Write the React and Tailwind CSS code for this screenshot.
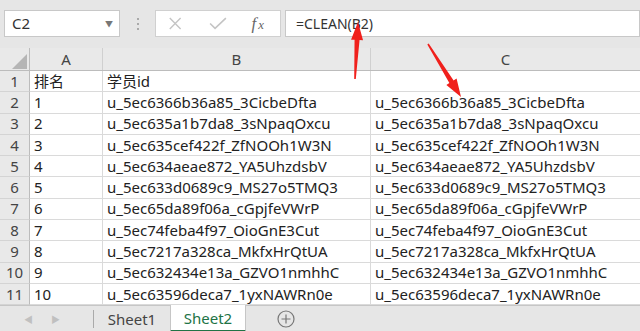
import React from 'react';

const rows = [
  ['排名', '学员id', ''],
  ['1', 'u_5ec6366b36a85_3CicbeDfta', 'u_5ec6366b36a85_3CicbeDfta'],
  ['2', 'u_5ec635a1b7da8_3sNpaqOxcu', 'u_5ec635a1b7da8_3sNpaqOxcu'],
  ['3', 'u_5ec635cef422f_ZfNOOh1W3N', 'u_5ec635cef422f_ZfNOOh1W3N'],
  ['4', 'u_5ec634aeae872_YA5UhzdsbV', 'u_5ec634aeae872_YA5UhzdsbV'],
  ['5', 'u_5ec633d0689c9_MS27o5TMQ3', 'u_5ec633d0689c9_MS27o5TMQ3'],
  ['6', 'u_5ec65da89f06a_cGpjfeVWrP', 'u_5ec65da89f06a_cGpjfeVWrP'],
  ['7', 'u_5ec74feba4f97_OioGnE3Cut', 'u_5ec74feba4f97_OioGnE3Cut'],
  ['8', 'u_5ec7217a328ca_MkfxHrQtUA', 'u_5ec7217a328ca_MkfxHrQtUA'],
  ['9', 'u_5ec632434e13a_GZVO1nmhhC', 'u_5ec632434e13a_GZVO1nmhhC'],
  ['10', 'u_5ec63596deca7_1yxNAWRn0e', 'u_5ec63596deca7_1yxNAWRn0e'],
];

const font = { fontFamily: '"Noto Sans", "Noto Sans CJK SC", sans-serif' };

const Arrow = ({ x1, y1, x2, y2 }) => {
  // tapered red arrow, tip at (x2, y2)
  const dx = x2 - x1;
  const dy = y2 - y1;
  const len = Math.hypot(dx, dy);
  const ux = dx / len;
  const uy = dy / len;
  const px = -uy;
  const py = ux;
  const hb = 18; // head length
  const bx = x2 - ux * hb;
  const by = y2 - uy * hb;
  const pts = [
    [x1 + px * 0.8, y1 + py * 0.8],
    [bx + px * 2.5, by + py * 2.5],
    [bx + px * 6, by + py * 6],
    [x2, y2],
    [bx - px * 6, by - py * 6],
    [bx - px * 2.5, by - py * 2.5],
    [x1 - px * 0.8, y1 - py * 0.8],
  ];
  return <polygon points={pts.map((p) => p.join(',')).join(' ')} fill="#f0201c" />;
};

const App = () => {
  return (
    <div className="relative w-[640px] h-[331px] overflow-hidden bg-[#e6e6e6] text-[#222]" style={font}>
      {/* formula bar */}
      <div className="flex items-center h-[48px] pt-[10px] pb-[11px] pl-[4px]">
        <div className="flex items-center justify-between w-[116px] h-[27px] bg-white border border-[#c8c8c8] pl-[7px] pr-[6px]">
          <span className="text-[15px] text-[#333]">C2</span>
          <span className="text-[8px] text-[#777]">▼</span>
        </div>
        <div className="flex flex-col gap-[3px] w-[35px] items-center">
          <span className="w-[2px] h-[2px] bg-[#aaa]" />
          <span className="w-[2px] h-[2px] bg-[#aaa]" />
          <span className="w-[2px] h-[2px] bg-[#aaa]" />
        </div>
        <div className="flex items-center w-[126px] h-[27px] bg-white border border-[#d0d0d0]">
          <svg width="126" height="27" viewBox="0 0 126 27">
            <path d="M14 8 L25 19 M25 8 L14 19" stroke="#c4c4c4" strokeWidth="1.4" fill="none" />
            <path d="M55 13.5 L60 18.5 L71 8" stroke="#c4c4c4" strokeWidth="1.6" fill="none" />
            <text x="97" y="19" fontFamily="Liberation Serif, serif" fontStyle="italic" fontSize="17" fill="#666">f</text>
            <text x="104" y="19" fontFamily="Liberation Serif, serif" fontStyle="italic" fontSize="13" fill="#666">x</text>
          </svg>
        </div>
        <div className="flex items-center flex-1 h-[27px] ml-[4px] bg-white border border-[#c8c8c8] pl-[10px] text-[14px] text-[#333]">
          =CLEAN(B2)
        </div>
      </div>

      {/* grid */}
      <div className="flex flex-col bg-white">
        <div className="flex h-[23px] bg-[#e9e9e9] border-b border-[#bcbcbc] text-[15px] text-[#444]">
          <div className="relative w-[30px] border-r border-[#bcbcbc]">
            <svg className="absolute left-[12px] top-[6px]" width="15" height="15" viewBox="0 0 15 15">
              <polygon points="15,0 15,15 0,15" fill="#b5b5b5" />
            </svg>
          </div>
          <div className="flex items-center justify-center w-[73px] border-r border-[#d0d0d0]">A</div>
          <div className="flex items-center justify-center w-[268px] border-r border-[#d0d0d0]">B</div>
          <div className="flex items-center justify-center flex-1">C</div>
        </div>
        {rows.map((r, i) => (
          <div key={i} className="flex h-[21.3px] text-[15px] leading-none">
            <div className="flex items-center justify-center w-[30px] bg-[#e9e9e9] border-r border-[#bcbcbc] border-b border-b-[#d4d4d4] text-[#444]">
              {i + 1}
            </div>
            <div className="flex items-center w-[73px] pl-[4px] border-r border-b border-[#dadada]">{r[0]}</div>
            <div className="flex items-center w-[268px] pl-[4px] border-r border-b border-[#dadada] whitespace-nowrap overflow-hidden">{r[1]}</div>
            <div className="flex items-center flex-1 pl-[4px] border-b border-[#dadada] whitespace-nowrap overflow-hidden">{r[2]}</div>
          </div>
        ))}
      </div>

      {/* sheet tabs */}
      <div className="flex items-stretch h-[27px] bg-[#e6e6e6] border-t border-[#c6c6c6]">
        <div className="flex items-center gap-[18px] w-[93px] pl-[24px] text-[9px] text-[#c0c0c0]">
          <span>◀</span>
          <span>▶</span>
        </div>
        <div className="w-px my-[4px] bg-[#aaa]" />
        <div className="flex items-center justify-center w-[76px] text-[15px] text-[#444]">Sheet1</div>
        <div className="flex items-center justify-center w-[76px] -mt-px bg-white border-x border-[#c6c6c6] border-b-2 border-b-[#217346] text-[15px] text-[#217346]">
          Sheet2
        </div>
        <div className="flex items-center justify-center w-[80px]">
          <svg width="18" height="18" viewBox="0 0 18 18">
            <circle cx="9" cy="9" r="8" stroke="#777" strokeWidth="1.2" fill="none" />
            <path d="M9 4.5 V13.5 M4.5 9 H13.5" stroke="#777" strokeWidth="1.2" />
          </svg>
        </div>
      </div>

      {/* annotation arrows */}
      <svg className="absolute left-0 top-0 pointer-events-none" width="640" height="331">
        <Arrow x1={355} y1={79} x2={358} y2={22} />
        <Arrow x1={428} y1={44} x2={461} y2={97} />
      </svg>
    </div>
  );
};

export default App;
